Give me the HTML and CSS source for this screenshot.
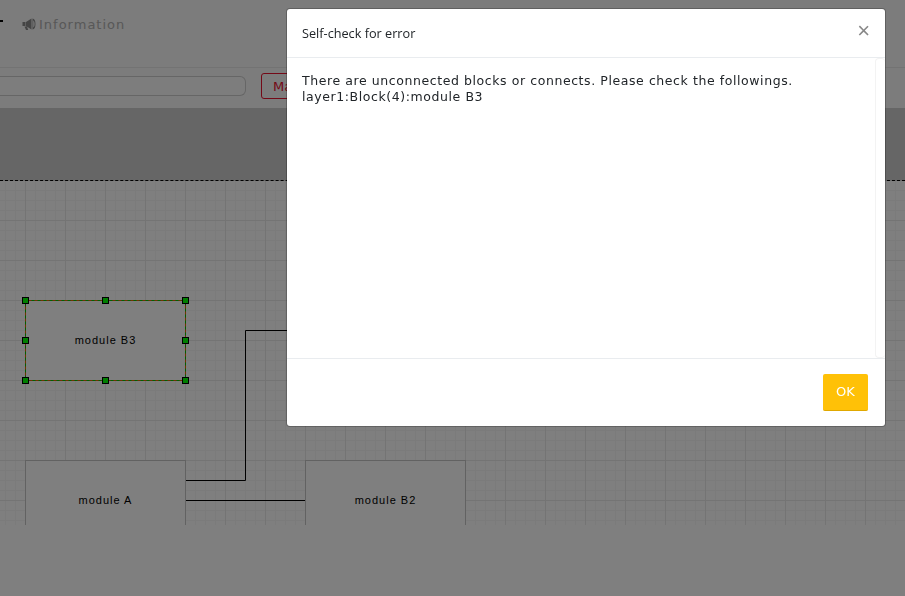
FILE: index.html
```html
<!DOCTYPE html>
<html lang="en">
<head>
<meta charset="utf-8">
<title>Self-check for error</title>
<link rel="stylesheet" href="styles.css">
</head>
<body>
<div class="app">
  <header class="menu">
    <span class="menu-tick"></span>
    <span class="menu-item">
      <svg class="mega" viewBox="0 0 14 14"><path d="M0.500 5h3v4h-3zM4 5l5.500-3.500v11L4 9zM2.500 9.500h2.500l1.200 3.500H4zM10.500 1.500c1.900 0 3 2.400 3 5.500s-1.100 5.500-3 5.500zM11.300 3.500v7c.8-.4 1.300-1.800 1.300-3.500s-.5-3.100-1.300-3.500z" fill-rule="evenodd"/></svg>
      Information
    </span>
  </header>
  <div class="toolbar">
    <div class="search"></div>
    <button class="outline">Manage</button>
  </div>
  <div class="band"></div>
  <div class="canvas">
    <svg class="diagram" width="905" height="344" viewBox="0 181 905 344">
      <g class="wires">
        <path d="M185.500 480.500h60v-150h60"/>
        <path d="M185.500 500.500h120"/>
      </g>
      <g class="block">
        <rect x="25.500" y="300.500" width="160" height="80"/>
        <rect x="25.500" y="460.500" width="160" height="80"/>
        <rect x="305.500" y="460.500" width="160" height="80"/>
      </g>
      <rect class="sel-base" x="25.500" y="300.500" width="160" height="80"/>
      <rect class="sel" x="25.500" y="300.500" width="160" height="80"/>
      <g class="labels">
        <text x="105.500" y="344">module B3</text>
        <text x="105.500" y="504">module A</text>
        <text x="385.500" y="504">module B2</text>
      </g>
      <g class="handles">
        <rect x="22.500" y="297.500" width="6" height="6"/>
        <rect x="102.500" y="297.500" width="6" height="6"/>
        <rect x="182.500" y="297.500" width="6" height="6"/>
        <rect x="22.500" y="337.500" width="6" height="6"/>
        <rect x="182.500" y="337.500" width="6" height="6"/>
        <rect x="22.500" y="377.500" width="6" height="6"/>
        <rect x="102.500" y="377.500" width="6" height="6"/>
        <rect x="182.500" y="377.500" width="6" height="6"/>
      </g>
    </svg>
  </div>
</div>
<div class="backdrop"></div>
<div class="modal">
  <div class="modal-head">
    <span class="modal-title">Self-check for error</span>
    <span class="close">×</span>
  </div>
  <div class="modal-main">
    <div class="modal-body">
      <p>There are unconnected blocks or connects. Please check the followings.</p>
      <p>layer1:Block(4):module B3</p>
    </div>
    <div class="scroll-track"></div>
  </div>
  <div class="modal-foot"><button class="ok">OK</button></div>
</div>
</body>
</html>
```
FILE: styles.css
```css
* { box-sizing: border-box; }
html, body { margin: 0; height: 100%; overflow: hidden; }
body { background: #fff; font-family: "DejaVu Sans", sans-serif; color: #212529; }
.app { width: 905px; height: 596px; overflow: hidden; }
.menu { height: 68px; background: #f8f8f8; border-bottom: 1px solid #e7e7e7; display: flex; align-items: center; padding-bottom: 19px; position: relative; }
.menu-tick { position: absolute; left: 0; top: 20px; width: 3px; height: 2px; background: #000; }
.menu-item { margin-left: 22px; display: flex; align-items: center; gap: 3px; font-size: 13px; letter-spacing: 1px; color: #b0b0b0; }
.mega { width: 14px; height: 14px; fill: #8a8a8a; }
.toolbar { height: 40px; background: #f8f8f8; display: flex; align-items: flex-start; padding-top: 8px; gap: 15px; }
.search { width: 246px; height: 20px; border: 1px solid #ccc; border-left: 0; border-radius: 0 6px 6px 0; background: #fafafa; }
.outline { width: 100px; height: 26px; margin-top: -3px; padding: 0 0 0 11px; text-align: left; background: transparent; border: 1px solid #e8132f; border-radius: 3px; color: #e8132f; font: 13px "DejaVu Sans", sans-serif; }
.band { height: 73px; background: #ccc; border-bottom: 1px dashed #000; }
.canvas { height: 344px; background-color: #fff;
  background-image:
    linear-gradient(to right, #e8e8e8 1px, transparent 1px),
    linear-gradient(to bottom, #e8e8e8 1px, transparent 1px),
    linear-gradient(to right, #f6f6f6 1px, transparent 1px),
    linear-gradient(to bottom, #f6f6f6 1px, transparent 1px);
  background-size: 40px 40px, 40px 40px, 10px 10px, 10px 10px;
  background-position: 25px 0, 0 -1px, 5px 0, 0 -1px; }
.diagram { display: block; }
.wires path { fill: none; stroke: #000; stroke-width: 1; }
.block rect { fill: #fff; stroke: #c4c4c4; }
.sel-base { fill: none; stroke: #e06000; }
.sel { fill: none; stroke: #00c000; stroke-dasharray: 3 3; }
.labels text { font: 11px "Liberation Sans", sans-serif; letter-spacing: 1px; text-anchor: middle; fill: #000; }
.handles rect { fill: #00ff00; stroke: #000; }
.backdrop { position: fixed; inset: 0; background: rgba(0,0,0,.5); }
.modal { position: fixed; left: 287px; top: 9px; width: 598px; height: 417px; background: #fff; border-radius: 3px; display: flex; flex-direction: column; box-shadow: 0 0 0 1px rgba(0,0,0,.22); }
.modal-head { height: 49px; flex: none; border-bottom: 1px solid #e9ecef; display: flex; align-items: center; justify-content: space-between; padding: 0 15px; }
.modal-title { font: 12.700px "Open Sans", "DejaVu Sans", sans-serif; color: #212529; }
.close { font: 400 22px "Liberation Sans", sans-serif; color: #888; margin-top: -4px; margin-right: 0; }
.modal-main { flex: 1; display: flex; min-height: 0; }
.modal-body { flex: 1; padding: 15px; font-size: 12.500px; line-height: 16px; letter-spacing: .58px; }
.modal-body p { margin: 0; white-space: nowrap; }
.scroll-track { width: 10px; border: 1px solid #f3f3f3; border-right: 0; border-radius: 4px; }
.modal-foot { height: 68px; flex: none; border-top: 1px solid #e9ecef; display: flex; align-items: flex-start; justify-content: flex-end; padding: 15px 17px 0 0; }
.ok { width: 45px; height: 37px; padding: 0 0 2px; background: #ffc107; border: 0; border-bottom: 1px solid #e0a800; border-radius: 2px; color: #fff; font: 13px "DejaVu Sans", sans-serif; }
```
